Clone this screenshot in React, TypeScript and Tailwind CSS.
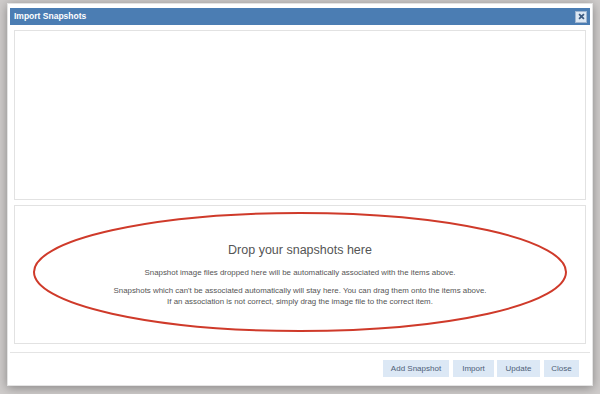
import React from 'react';

const buttons = [
  { label: 'Add Snapshot', cls: 'w-[66px]' },
  { label: 'Import', cls: 'w-[41px] ml-[4px]' },
  { label: 'Update', cls: 'w-[43px] ml-[3px]' },
  { label: 'Close', cls: 'w-[35px] ml-[4px]' },
];

export default function App() {
  return (
    <div
      className="relative w-[600px] h-[394px] overflow-hidden bg-[#cfcccb]"
      style={{ fontFamily: '"Liberation Sans", Arial, sans-serif' }}
    >
      <div className="absolute left-[7px] top-[3px] w-[586px] h-[383px] bg-white border border-[#e4e4e4] shadow-[0_2px_10px_rgba(0,0,0,0.35)] flex flex-col px-[2px] pt-[4px]">
        <div className="h-[17px] bg-[#4b7db3] flex items-center justify-between pl-[4px] pr-[3px]">
          <span className="text-white text-[8.5px] font-bold">Import Snapshots</span>
          <button className="w-[12px] h-[12px] bg-[#dde8f4] border border-[#9fb5d0] flex items-center justify-center">
            <svg width="7" height="7" viewBox="0 0 8 8">
              <path d="M1.2 1.2 L6.8 6.8 M6.8 1.2 L1.2 6.8" stroke="#3c5a80" strokeWidth="2" />
            </svg>
          </button>
        </div>

        <div className="flex flex-col gap-[5px] px-[4px] pt-[5px]">
          <div className="h-[170px] border border-[#e2e2e2] bg-white" />
          <div className="relative h-[139px] border border-[#e2e2e2] bg-white flex flex-col items-center text-[#555] text-center">
            <svg className="absolute left-0 top-0" width="572" height="139" viewBox="0 0 572 139">
              <ellipse cx="285" cy="66" rx="266" ry="59" fill="none" stroke="#cf3a2a" strokeWidth="2" />
            </svg>
            <div className="mt-[36px] text-[12.5px] leading-[16px]">Drop your snapshots here</div>
            <div className="mt-[9px] text-[7.9px] leading-[11px]">
              Snapshot image files dropped here will be automatically associated with the items above.
            </div>
            <div className="mt-[7px] text-[7.9px] leading-[11px]">
              Snapshots which can't be associated automatically will stay here. You can drag them onto the items above.
              <br />
              If an association is not correct, simply drag the image file to the correct item.
            </div>
          </div>
        </div>

        <div className="mt-[8px] border-t border-[#e4e4e4] flex justify-end pr-[11px] pt-[7px]">
          {buttons.map((b) => (
            <button key={b.label} className={`h-[17px] bg-[#dce8f5] text-[#4e6078] text-[8px] ${b.cls}`}>
              {b.label}
            </button>
          ))}
        </div>
      </div>
    </div>
  );
}
